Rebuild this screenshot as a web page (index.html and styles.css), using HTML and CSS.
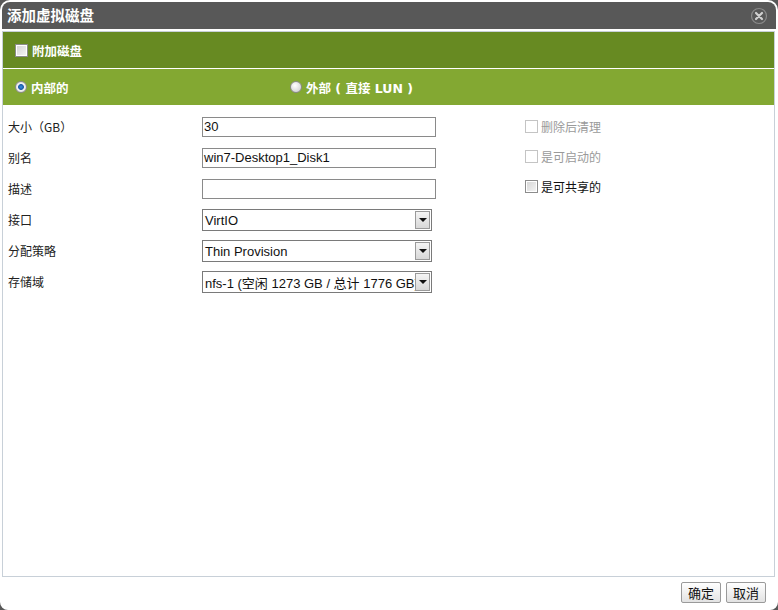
FILE: index.html
```html
<!DOCTYPE html>
<html lang="zh-CN">
<head>
<meta charset="utf-8">
<title>添加虚拟磁盘</title>
<link rel="stylesheet" href="styles.css">
</head>
<body>
<div class="dialog">
  <div class="titlebar">
    <span class="title">添加虚拟磁盘</span>
    <span class="close">
      <svg width="18" height="18" viewBox="0 0 18 18">
        <circle cx="9" cy="9" r="7.5" fill="none" stroke="#8a8a8a" stroke-width="1.2"/>
        <path d="M6 6 L12 12 M12 6 L6 12" stroke="#d0d0d0" stroke-width="2.2" stroke-linecap="round"/>
      </svg>
    </span>
  </div>
  <div class="content">
    <div class="bar bar-dark">
      <span class="cb"></span><span class="bar-text">附加磁盘</span>
    </div>
    <div class="bar bar-light">
      <div class="opt opt-first"><span class="radio checked"></span><span class="bar-text">内部的</span></div>
      <div class="opt"><span class="radio"></span><span class="bar-text">外部 ( 直接 LUN )</span></div>
    </div>
    <div class="form">
      <div class="fields">
        <div class="row"><span class="label">大小（GB）</span><div class="input">30</div></div>
        <div class="row"><span class="label">别名</span><div class="input">win7-Desktop1_Disk1</div></div>
        <div class="row"><span class="label">描述</span><div class="input"></div></div>
        <div class="row"><span class="label">接口</span><div class="select"><span class="sel-text">VirtIO</span><span class="arrow"></span></div></div>
        <div class="row"><span class="label">分配策略</span><div class="select"><span class="sel-text">Thin Provision</span><span class="arrow"></span></div></div>
        <div class="row"><span class="label">存储域</span><div class="select"><span class="sel-text">nfs-1 (空闲 1273 GB / 总计 1776 GB)</span><span class="arrow"></span></div></div>
      </div>
      <div class="checks">
        <div class="check disabled"><span class="cb light"></span><span>删除后清理</span></div>
        <div class="check disabled"><span class="cb light"></span><span>是可启动的</span></div>
        <div class="check"><span class="cb"></span><span>是可共享的</span></div>
      </div>
    </div>
  </div>
  <div class="footer">
    <button class="btn">确定</button>
    <button class="btn">取消</button>
  </div>
</div>
</body>
</html>
```
FILE: styles.css
```css
html, body {
  margin: 0;
  padding: 0;
  background: #585858;
  width: 778px;
  height: 610px;
  overflow: hidden;
}
body {
  font-family: "Liberation Sans", "Noto Sans CJK SC", sans-serif;
  font-size: 12px;
  color: #222;
}
.dialog {
  box-sizing: border-box;
  width: 778px;
  height: 610px;
  border: 2px solid #fff;
  border-radius: 10px 10px 8px 8px;
  background: #fff;
  display: flex;
  flex-direction: column;
  overflow: hidden;
}
.titlebar {
  height: 28px;
  flex: none;
  background: #585858;
  display: flex;
  align-items: center;
  justify-content: space-between;
  padding: 0 10px 0 6px;
  margin: -1px -1px 0 -1px;
}
.title {
  color: #fff;
  font-family: "Noto Sans CJK SC", sans-serif;
  font-size: 14.5px;
  font-weight: bold;
  line-height: 1;
  margin-top: 1px;
}
.close {
  display: flex;
  margin-right: -1px;
  margin-top: 1px;
}
.content {
  flex: 1;
  margin: 2px 1px 0 0;
  border: 1px solid #c8d0d8;
  display: flex;
  flex-direction: column;
}
.bar {
  height: 36px;
  display: flex;
  align-items: center;
  padding-left: 12px;
  color: #fff;
}
.bar-dark {
  background: #678a22;
  border-bottom: 1px solid #fff;
}
.bar-light {
  background: #83a832;
}
.bar-text {
  font-family: "DejaVu Sans", "Noto Sans CJK SC", sans-serif;
  font-weight: bold;
  font-size: 12.5px;
  color: #fff;
  margin-left: 4px;
}
.opt {
  display: flex;
  align-items: center;
}
.opt-first {
  width: 275px;
}
.cb {
  box-sizing: border-box;
  width: 13px;
  height: 13px;
  border: 1px solid #8c8c8c;
  background: linear-gradient(135deg, #d4d4d4, #f6f6f6);
  box-shadow: inset 0 0 0 1px #fff;
  flex: none;
  display: inline-block;
}
.cb.light {
  border-color: #c4c4c4;
  background: #fff;
  box-shadow: none;
}
.radio {
  box-sizing: border-box;
  width: 12px;
  height: 12px;
  border-radius: 50%;
  border: 1px solid #8a8a8a;
  background: radial-gradient(circle at 40% 35%, #ffffff, #c8c8c8);
  flex: none;
  display: inline-block;
}
.radio.checked {
  background: radial-gradient(circle at 50% 50%, #3a8ee0 0, #1a5ba8 2.5px, #f2f2f2 3.3px, #d0d0d0 100%);
}
.form {
  display: flex;
  padding: 6px 0 0 5px;
}
.fields {
  width: 517px;
  display: flex;
  flex-direction: column;
}
.row {
  height: 31px;
  display: flex;
  align-items: center;
}
.label {
  width: 194px;
  flex: none;
  font-family: "Noto Sans CJK SC", sans-serif;
  font-size: 12px;
  color: #222;
}
.input {
  box-sizing: border-box;
  width: 234px;
  height: 20px;
  border: 1px solid #8a8a8a;
  font-size: 13px;
  line-height: 18px;
  padding-left: 1px;
  color: #111;
  white-space: nowrap;
  overflow: hidden;
}
.select {
  box-sizing: border-box;
  width: 230px;
  height: 22px;
  border: 1px solid #7a7a7a;
  display: flex;
  align-items: center;
  padding: 1px 1px 1px 0;
  background: #fff;
  margin-top: 1px;
}
.sel-text {
  flex: 1;
  min-width: 0;
  font-size: 13px;
  color: #111;
  white-space: nowrap;
  overflow: hidden;
  padding-left: 2px;
  font-family: "Liberation Sans", "Noto Sans CJK SC", sans-serif;
}
.arrow {
  box-sizing: border-box;
  width: 15px;
  height: 18px;
  flex: none;
  border: 1px solid #9a9a9a;
  background: linear-gradient(#f4f4f4, #d8d8d8);
  position: relative;
}
.arrow::after {
  content: "";
  position: absolute;
  left: 3px;
  top: 6px;
  border-left: 4px solid transparent;
  border-right: 4px solid transparent;
  border-top: 4px solid #111;
}
.checks {
  display: flex;
  flex-direction: column;
}
.check {
  height: 30px;
  display: flex;
  align-items: center;
  font-family: "Noto Sans CJK SC", sans-serif;
  font-size: 12px;
  color: #111;
}
.check span:last-child {
  margin-left: 3px;
}
.check.disabled {
  color: #9a9a9a;
}
.footer {
  height: 31px;
  flex: none;
  display: flex;
  justify-content: flex-end;
  align-items: center;
  gap: 5px;
  padding-right: 10px;
}
.btn {
  box-sizing: border-box;
  width: 40px;
  height: 21px;
  border: 1px solid #9a9a9a;
  border-radius: 2px;
  background: linear-gradient(#ffffff, #e2e2e2);
  font-family: "Noto Sans CJK SC", sans-serif;
  font-size: 13px;
  color: #111;
  padding: 0;
  line-height: 1;
}
```
